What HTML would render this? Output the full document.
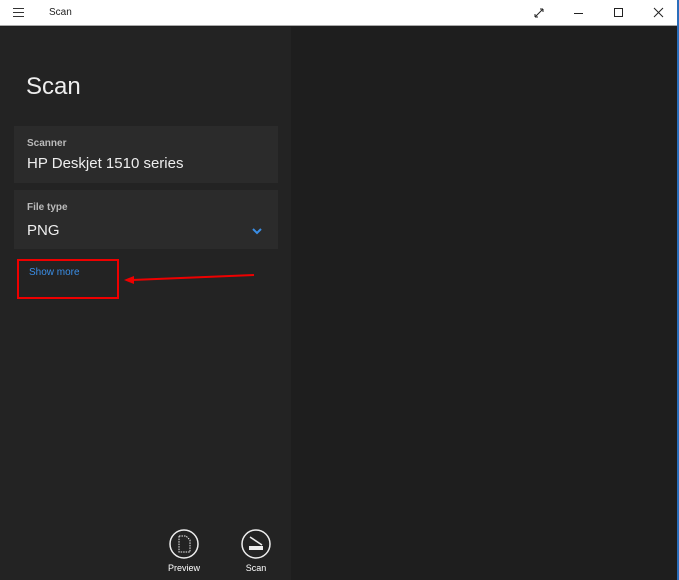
<!DOCTYPE html>
<html><head><style>
*{margin:0;padding:0;box-sizing:border-box}
body{width:679px;height:580px;overflow:hidden;background:#1e1e1e;font-family:"Liberation Sans",sans-serif;position:relative}
.tb{position:absolute;left:0;top:0;width:679px;height:26px;background:#fff;border-bottom:1px solid #aaa}
.left{position:absolute;left:0;top:27px;width:291px;height:553px;background:#232323}
.edge{position:absolute;right:0;top:0;width:2px;height:580px;background:#2a6ebb}
.card{position:absolute;left:14px;width:264px;background:#2b2b2b}
.lbl{position:absolute;left:13px;font-size:10px;font-weight:bold;color:#bbb}
.val{position:absolute;left:13px;font-size:15px;color:#eee}
.a{position:absolute;color:#fff;font-size:9px;text-align:center;width:60px}
</style></head><body>
<div class="tb">
<div style="position:absolute;left:13px;top:8px;width:11px;height:1px;background:#333;box-shadow:0 4px #333,0 8px #333"></div>
<div style="position:absolute;left:49px;top:7px;font-size:10px;color:#222">Scan</div>
<svg style="position:absolute;left:533px;top:7px" width="12" height="12"><path d="M2 10L10 2M2 10v-3M2 10h3M10 2h-3M10 2v3" stroke="#222" fill="none"/></svg>
<div style="position:absolute;left:574px;top:13px;width:9px;height:1px;background:#222"></div>
<div style="position:absolute;left:614px;top:8px;width:9px;height:9px;border:1px solid #222"></div>
<svg style="position:absolute;left:653px;top:7px" width="11" height="11"><path d="M1 1L10 10M10 1L1 10" stroke="#222"/></svg>
</div>
<div class="left"></div>
<div class="edge"></div>
<div style="position:absolute;left:26px;top:73px;font-size:24px;color:#eee">Scan</div>
<div class="card" style="top:126px;height:57px"><div class="lbl" style="top:12px">Scanner</div><div class="val" style="top:29px">HP Deskjet 1510 series</div></div>
<div class="card" style="top:190px;height:59px"><div class="lbl" style="top:12px">File type</div><div class="val" style="top:32px">PNG</div>
<svg style="position:absolute;left:238px;top:38px" width="10" height="7"><path d="M1 1L5 5L9 1" stroke="#3a8ee6" stroke-width="2" fill="none"/></svg></div>
<div style="position:absolute;left:29px;top:267px;font-size:10px;color:#3a8ee6">Show more</div>
<div style="position:absolute;left:17px;top:259px;width:102px;height:40px;border:2px solid #e00"></div>
<svg style="position:absolute;left:120px;top:268px" width="140" height="20"><path d="M134 7L12 12" stroke="#e00" stroke-width="2"/><path d="M4 12L14 8L14 16Z" fill="#e00"/></svg>
<svg style="position:absolute;left:168px;top:528px" width="32" height="32"><circle cx="16" cy="16" r="14" stroke="#eee" stroke-width="1.5" fill="none"/><path d="M11 8h7l4 4v12h-11z" stroke="#eee" stroke-dasharray="1.5 1" fill="none"/></svg>
<div class="a" style="left:154px;top:563px">Preview</div>
<svg style="position:absolute;left:240px;top:528px" width="32" height="32"><circle cx="16" cy="16" r="14" stroke="#eee" stroke-width="1.5" fill="none"/><path d="M10 9l12 8" stroke="#eee" stroke-width="1.5"/><rect x="9" y="18" width="14" height="4" fill="#eee"/></svg>
<div class="a" style="left:226px;top:563px">Scan</div>
</body></html>
